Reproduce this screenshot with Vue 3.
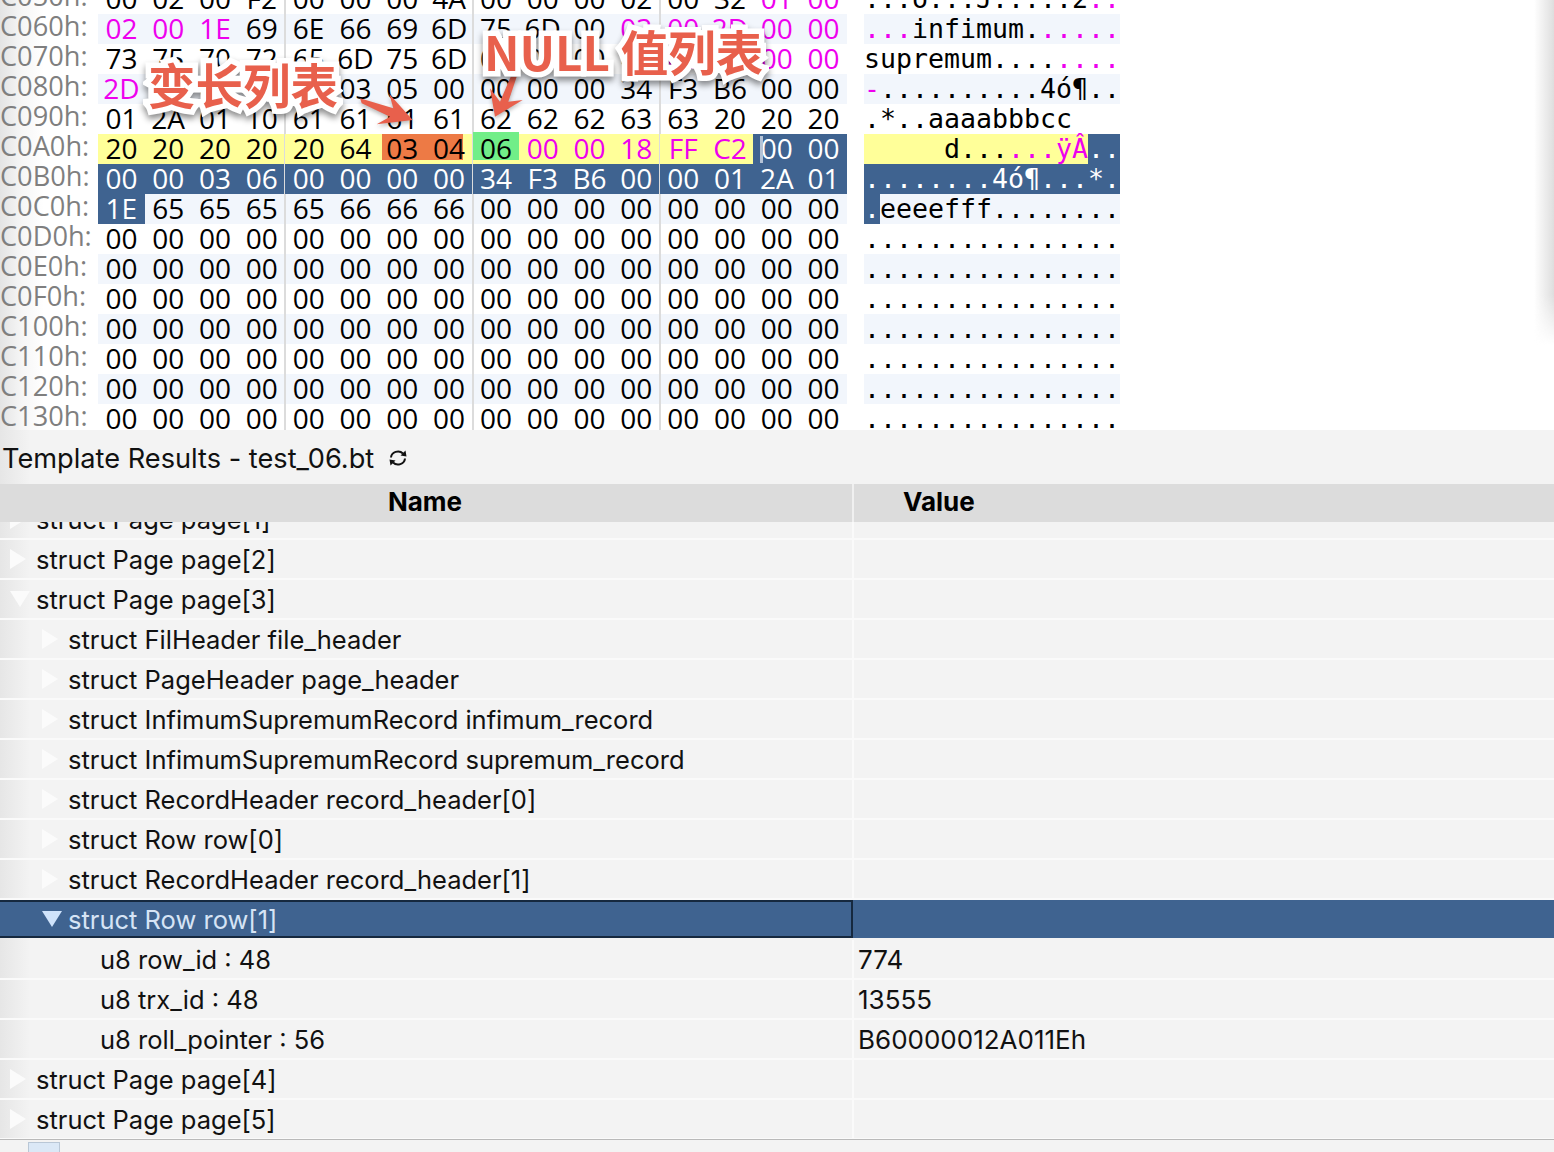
<script setup>
const hexRows = [
  { label: 'C050h:', hex: '00 02 00 F2 00 00 00 4A 00 00 00 02 00 32 01 00', ascii: '...ò...J.....2..', pink: [14, 15] },
  { label: 'C060h:', hex: '02 00 1E 69 6E 66 69 6D 75 6D 00 03 00 2D 00 00', ascii: '...infimum......', pink: [0, 1, 2, 11, 12, 13, 14, 15] },
  { label: 'C070h:', hex: '73 75 70 72 65 6D 75 6D 00 00 00 00 00 00 00 00', ascii: 'supremum........', pink: [12, 13, 14, 15] },
  { label: 'C080h:', hex: '2D 00 00 00 00 03 05 00 00 00 00 34 F3 B6 00 00', ascii: '-..........4ó¶..', pink: [0] },
  { label: 'C090h:', hex: '01 2A 01 10 61 61 61 61 62 62 62 63 63 20 20 20', ascii: '.*..aaaabbbcc   ', pink: [] },
  { label: 'C0A0h:', hex: '20 20 20 20 20 64 03 04 06 00 00 18 FF C2 00 00', ascii: '     d......ÿÂ..', pink: [9, 10, 11, 12, 13], yellowTo: 14, selFrom: 14 },
  { label: 'C0B0h:', hex: '00 00 03 06 00 00 00 00 34 F3 B6 00 00 01 2A 01', ascii: '........4ó¶...*.', pink: [], selFrom: 0 },
  { label: 'C0C0h:', hex: '1E 65 65 65 65 66 66 66 00 00 00 00 00 00 00 00', ascii: '.eeeefff........', pink: [], selTo: 1 },
  ...['C0D0h:', 'C0E0h:', 'C0F0h:', 'C100h:', 'C110h:', 'C120h:', 'C130h:'].map(label => ({
    label, hex: '00 00 00 00 00 00 00 00 00 00 00 00 00 00 00 00', ascii: '................', pink: []
  }))
]

function asciiClass(row, i) {
  const sel = (row.selFrom !== undefined && i >= row.selFrom) || (row.selTo !== undefined && i < row.selTo)
  return {
    sel,
    pink: row.pink.includes(i),
    yellow: row.yellowTo !== undefined && i < row.yellowTo
  }
}

function cellClass(row, i) {
  const isTarget = row.label === 'C0A0h:'
  return {
    ...asciiClass(row, i),
    'orange-l': isTarget && i === 6,
    'orange-r': isTarget && i === 7,
    green: isTarget && i === 8
  }
}

const groups = [0, 4, 8, 12]
const bytes = row => row.hex.split(' ')

const tree = [
  { name: 'struct Page page[1]', level: 0, arrow: 'r', cut: true },
  { name: 'struct Page page[2]', level: 0, arrow: 'r' },
  { name: 'struct Page page[3]', level: 0, arrow: 'd' },
  { name: 'struct FilHeader file_header', level: 1, arrow: 'r' },
  { name: 'struct PageHeader page_header', level: 1, arrow: 'r' },
  { name: 'struct InfimumSupremumRecord infimum_record', level: 1, arrow: 'r' },
  { name: 'struct InfimumSupremumRecord supremum_record', level: 1, arrow: 'r' },
  { name: 'struct RecordHeader record_header[0]', level: 1, arrow: 'r' },
  { name: 'struct Row row[0]', level: 1, arrow: 'r' },
  { name: 'struct RecordHeader record_header[1]', level: 1, arrow: 'r' },
  { name: 'struct Row row[1]', level: 1, arrow: 'd', selected: true },
  { name: 'u8 row_id : 48', level: 2, value: '774' },
  { name: 'u8 trx_id : 48', level: 2, value: '13555' },
  { name: 'u8 roll_pointer : 56', level: 2, value: 'B60000012A011Eh' },
  { name: 'struct Page page[4]', level: 0, arrow: 'r' },
  { name: 'struct Page page[5]', level: 0, arrow: 'r' }
]
</script>

<template>
  <div class="app">
    <section class="hex">
      <div class="hex-inner">
        <div v-for="(row, r) in hexRows" :key="row.label" class="hex-row" :class="{ odd: r % 2 === 1 }">
          <div class="label">{{ row.label }}</div>
          <div class="bytes">
            <div v-for="g in groups" :key="g" class="group">
              <span v-for="i in 4" :key="i" class="cell" :class="cellClass(row, g + i - 1)">{{ bytes(row)[g + i - 1] }}</span>
            </div>
          </div>
          <div class="ascii">
            <span v-for="(c, i) in row.ascii" :key="i" class="ch" :class="asciiClass(row, i)">{{ c }}</span>
          </div>
        </div>
      </div>
      <div class="caret"></div>
      <svg class="arrow arrow-a" width="60" height="36" viewBox="0 0 60 36">
        <path d="M2 6.3 L35.3 16.3 L31.3 2 L54.7 28 L18.7 32.3 L32 24.7 L3.7 11.3 Z" fill="#e8604c" />
      </svg>
      <svg class="arrow arrow-b" width="40" height="46" viewBox="0 0 40 46">
        <path d="M22.7 2.7 L28.7 2.7 L20.3 27.7 L34.7 26 L7 42.7 L2 14.3 L12 27.7 Z" fill="#e8604c" />
      </svg>
      <div class="note note-a">变长列表</div>
      <div class="note note-b">NULL 值列表</div>
      <div class="right-shade"></div>
    </section>

    <section class="results">
      <div class="title">
        <span>Template Results - test_06.bt</span>
        <svg class="refresh" width="20" height="18" viewBox="0 0 20 18">
          <path d="M3 8.5 A7 6.5 0 0 1 15 4.5 M17 9.5 A7 6.5 0 0 1 5 13.5" fill="none" stroke="#111" stroke-width="2" />
          <path d="M12.5 6.5 L18.5 7.5 L17.5 1.5 Z M7.5 11.5 L1.5 10.5 L2.5 16.5 Z" fill="#111" />
        </svg>
      </div>
      <div class="thead">
        <div class="th-name">Name</div>
        <div class="th-value">Value</div>
      </div>
      <div class="tbody">
        <div
          v-for="item in tree"
          :key="item.name"
          class="tr"
          :class="{ selected: item.selected }"
        >
          <div class="td-name" :class="'lv' + item.level">
            <span v-if="item.arrow" class="tw" :class="item.arrow"></span>
            <span class="txt">{{ item.name }}</span>
          </div>
          <div class="td-value">{{ item.value }}</div>
        </div>
      </div>
      <div class="status"><span class="status-box"></span></div>
    </section>
  </div>
</template>

<style scoped>
.app {
  width: 1554px;
  height: 1152px;
  overflow: hidden;
  background: #fff;
  position: relative;
}
.hex {
  position: relative;
  height: 430px;
  overflow: hidden;
  background: linear-gradient(90deg, #e4e4e4 0, #f6f6f6 22px, #fff 44px);
}
.hex-inner {
  margin-top: -16px;
}
.hex-row {
  display: flex;
  height: 30px;
  font: 28px/28px "Open Sans", sans-serif;
  color: #000;
}
.label {
  width: 98px;
  flex: none;
  font-size: 27.2px;
  line-height: 24px;
  color: #7f7f7f;
  white-space: pre;
}
.bytes {
  display: flex;
  width: 749px;
}
.group {
  display: flex;
  width: 187.25px;
  position: relative;
}
.group::after {
  content: "";
  position: absolute;
  top: 0;
  bottom: 0;
  right: -1px;
  width: 2px;
  background: #dcdcdc;
}
.group:last-child::after {
  display: none;
}
.cell {
  flex: 1 0 0;
  text-align: center;
  white-space: pre;
}
.ascii {
  display: flex;
  width: 256px;
  margin-left: 17px;
  font: 26.6px/30px "DejaVu Sans Mono", monospace;
}
.ch {
  width: 16px;
  text-align: center;
  white-space: pre;
}
.odd .bytes,
.odd .ascii {
  background: #f2f6fc;
}
.pink {
  color: #ee00ee;
}
.yellow {
  background: #ffff99;
}
.cell.orange-l {
  background: linear-gradient(#ed7a45, #ed7a45) 3px 0 / 100% 26px no-repeat #ffff99;
}
.cell.orange-r {
  background: linear-gradient(#ed7a45, #ed7a45) -10px 0 / 100% 26px no-repeat #ffff99;
}
.cell.green {
  background: linear-gradient(#71ee88, #71ee88) 0 0 / 100% 26px no-repeat #ffff99;
  box-shadow: 0 -2px 0 #71ee88;
}
.sel {
  background: #3f6390;
  color: #fff;
}
.caret {
  position: absolute;
  left: 760px;
  top: 136px;
  width: 3px;
  height: 27px;
  background: #b5c3d6;
}
.note {
  position: absolute;
  font: 700 47.5px/1 "Noto Sans CJK SC", sans-serif;
  color: #e8604c;
  -webkit-text-stroke: 11px #fff;
  paint-order: stroke fill;
  filter: drop-shadow(0 4px 3px rgba(0, 0, 0, .45));
  white-space: nowrap;
}
.note-a {
  left: 148px;
  top: 60px;
}
.note-b {
  left: 484px;
  top: 27px;
}
.arrow {
  position: absolute;
  filter: drop-shadow(0 2px 2px rgba(0, 0, 0, .3));
}
.arrow-a {
  left: 358px;
  top: 92px;
}
.arrow-b {
  left: 488px;
  top: 74px;
}
.right-shade {
  position: absolute;
  right: 0;
  top: 0;
  width: 20px;
  height: 345px;
  background: linear-gradient(90deg, rgba(222, 222, 222, 0), #dedede);
  -webkit-mask-image: linear-gradient(#000 295px, transparent 345px);
  mask-image: linear-gradient(#000 295px, transparent 345px);
}
.results {
  height: 722px;
  background: linear-gradient(90deg, #e6e6e6 0, #f3f3f3 30px);
  font-family: Inter, "Noto Sans", sans-serif;
  font-size: 25.5px;
  color: #111;
  display: flex;
  flex-direction: column;
  position: relative;
}
.title {
  height: 54px;
  padding-left: 2px;
  padding-top: 2px;
  display: flex;
  align-items: center;
  gap: 14px;
  flex: none;
  font-size: 27.2px;
  box-sizing: border-box;
}
.refresh {
  flex: none;
}
.thead {
  display: flex;
  height: 38px;
  flex: none;
  background: #dcdcdc;
  font-size: 26px;
  font-weight: 700;
  line-height: 36px;
  color: #000;
  position: relative;
  z-index: 1;
}
.th-name {
  width: 854px;
  padding-right: 2px;
  box-sizing: border-box;
  text-align: center;
  border-right: 2px solid #f0f0f0;
}
.th-value {
  padding-left: 49px;
}
.tbody {
  flex: 1;
  overflow: hidden;
  margin-top: -22px;
  position: relative;
}
.tr {
  display: flex;
  height: 40px;
  line-height: 40px;
  box-sizing: border-box;
  border-bottom: 2px solid #fafafa;
}
.td-name {
  width: 854px;
  box-sizing: border-box;
  border-right: 2px solid #fafafa;
  display: flex;
  align-items: center;
  position: relative;
  flex: none;
}
.txt {
  padding-top: 2px;
}
.lv0 { padding-left: 36px; }
.lv1 { padding-left: 68px; }
.lv2 { padding-left: 100px; }
.td-value {
  padding-left: 4px;
  font-size: 26px;
}
.tw {
  position: absolute;
  width: 0;
  height: 0;
}
.tw.r {
  border-left: 16px solid #fbfbfb;
  border-top: 10px solid transparent;
  border-bottom: 10px solid transparent;
}
.tw.d {
  border-top: 16px solid #fbfbfb;
  border-left: 10px solid transparent;
  border-right: 10px solid transparent;
}
.lv0 .tw { left: 10px; }
.lv1 .tw { left: 42px; }
.selected {
  background: #3f6390;
  color: #d6e4f5;
  border-bottom: 0;
  height: 38px;
  margin-bottom: 2px;
  line-height: 38px;
}
.selected .td-name {
  width: 853px;
  border: 2px solid #16293f;
  border-left: 0;
  padding-left: 68px;
}
.selected .tw.d {
  border-top-color: #cfe3fb;
}
.status {
  flex: none;
  height: 12px;
  border-top: 1px solid #b9b9b9;
  background: #f3f3f3;
  padding-left: 28px;
}
.status-box {
  display: block;
  width: 32px;
  height: 11px;
  margin-top: 2px;
  background: #dbe8f6;
  border: 1px solid #b9c7d6;
  box-sizing: border-box;
}
</style>

<style>
html, body { margin: 0; }
</style>
